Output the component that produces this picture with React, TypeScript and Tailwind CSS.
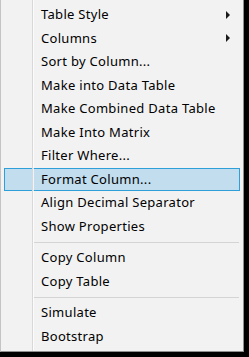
import React from "react";

type Entry = { label: string; sub?: boolean; active?: boolean } | "sep";

const entries: Entry[] = [
  { label: "Table Style", sub: true },
  { label: "Columns", sub: true },
  { label: "Sort by Column..." },
  { label: "Make into Data Table" },
  { label: "Make Combined Data Table" },
  { label: "Make Into Matrix" },
  { label: "Filter Where..." },
  { label: "Format Column...", active: true },
  { label: "Align Decimal Separator" },
  { label: "Show Properties" },
  "sep",
  { label: "Copy Column" },
  { label: "Copy Table" },
  "sep",
  { label: "Simulate" },
  { label: "Bootstrap" },
];

function Arrow() {
  return (
    <svg width="4" height="8" viewBox="0 0 4 8" className="mr-[9px]">
      <path d="M0 0 L4 4 L0 8 Z" fill="#1a1a1a" />
    </svg>
  );
}

export default function App() {
  return (
    <div className="w-[249px] h-[357px] bg-black">
      <div
        className="relative w-[244px] h-[352px] bg-[#f2f2f2] border-l border-l-[#c4c4c4] border-r border-r-[#8f8f8f] border-b border-b-[#8f8f8f] pt-[3px] pl-[3px] pr-[3px]"
        style={{ fontFamily: '"Noto Sans", "Open Sans", sans-serif' }}
      >
        {/* gutter line */}
        <div className="absolute left-[31px] top-0 bottom-0 w-px bg-[#d8d8d8]" />
        <div className="absolute left-[32px] top-0 bottom-0 w-px bg-white/70" />
        {entries.map((e, i) =>
          e === "sep" ? (
            <div key={i} className="h-[8px] flex items-center pl-[30px] pr-[1px]">
              <div className="h-px w-full bg-[#d4d4d4]" />
            </div>
          ) : (
            <div
              key={i}
              className={`h-[23.5px] flex items-center justify-between text-[13px] tracking-[0.3px] text-black ${
                e.active ? "bg-[#c1ddee] border border-[#2f9fd9]" : "border border-transparent"
              }`}
            >
              <span className="pl-[36px] leading-none">{e.label}</span>
              {e.sub && <Arrow />}
            </div>
          )
        )}
      </div>
    </div>
  );
}
